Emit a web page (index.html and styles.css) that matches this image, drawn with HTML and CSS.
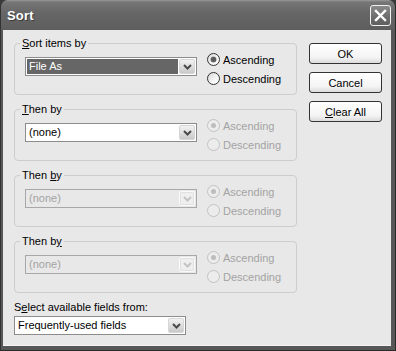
FILE: index.html
```html
<!DOCTYPE html>
<html lang="en">
<head>
  <meta charset="UTF-8" />
  <title>Sort</title>
  <link rel="stylesheet" href="styles.css">
</head>
<body>
  <div class="window">
    <div class="title-bar">
      <span class="title">Sort</span>
      <button class="close-button" aria-label="Close">
        <svg width="13" height="13" viewBox="0 0 13 13">
          <path d="M2 2 L11 11 M11 2 L2 11" stroke="#fff" stroke-width="2.4" stroke-linecap="square" fill="none" />
        </svg>
      </button>
    </div>

    <div class="dialog">
      <div class="fields">
        <fieldset class="group">
          <legend><u>S</u>ort items by</legend>
          <div class="combo">
            <span class="combo-value selected">File As</span>
            <span class="combo-button">
              <svg width="9" height="6" viewBox="0 0 9 6"><path d="M1 1 L4.5 4.5 L8 1" stroke="#4a4a4a" stroke-width="2" fill="none" /></svg>
            </span>
          </div>
          <div class="radios">
            <label class="radio checked"><span class="dot"></span>Ascending</label>
            <label class="radio"><span class="dot"></span>Descending</label>
          </div>
        </fieldset>

        <fieldset class="group">
          <legend><u>T</u>hen by</legend>
          <div class="combo">
            <span class="combo-value">(none)</span>
            <span class="combo-button">
              <svg width="9" height="6" viewBox="0 0 9 6"><path d="M1 1 L4.5 4.5 L8 1" stroke="#4a4a4a" stroke-width="2" fill="none" /></svg>
            </span>
          </div>
          <div class="radios disabled">
            <label class="radio checked"><span class="dot"></span>Ascending</label>
            <label class="radio"><span class="dot"></span>Descending</label>
          </div>
        </fieldset>

        <fieldset class="group">
          <legend>Then <u>b</u>y</legend>
          <div class="combo disabled">
            <span class="combo-value">(none)</span>
            <span class="combo-button">
              <svg width="9" height="6" viewBox="0 0 9 6"><path d="M1 1 L4.5 4.5 L8 1" stroke="#c4c4c4" stroke-width="2" fill="none" /></svg>
            </span>
          </div>
          <div class="radios disabled">
            <label class="radio checked"><span class="dot"></span>Ascending</label>
            <label class="radio"><span class="dot"></span>Descending</label>
          </div>
        </fieldset>

        <fieldset class="group">
          <legend>Then b<u>y</u></legend>
          <div class="combo disabled">
            <span class="combo-value">(none)</span>
            <span class="combo-button">
              <svg width="9" height="6" viewBox="0 0 9 6"><path d="M1 1 L4.5 4.5 L8 1" stroke="#c4c4c4" stroke-width="2" fill="none" /></svg>
            </span>
          </div>
          <div class="radios disabled">
            <label class="radio checked"><span class="dot"></span>Ascending</label>
            <label class="radio"><span class="dot"></span>Descending</label>
          </div>
        </fieldset>

        <div class="source-label">S<u>e</u>lect available fields from:</div>
        <div class="combo">
          <span class="combo-value">Frequently-used fields</span>
          <span class="combo-button">
            <svg width="9" height="6" viewBox="0 0 9 6"><path d="M1 1 L4.5 4.5 L8 1" stroke="#4a4a4a" stroke-width="2" fill="none" /></svg>
          </span>
        </div>
      </div>

      <div class="buttons">
        <button class="button">OK</button>
        <button class="button">Cancel</button>
        <button class="button"><u>C</u>lear All</button>
      </div>
    </div>
  </div>
</body>
</html>
```

FILE: styles.css
```css
* {
  box-sizing: border-box;
  margin: 0;
  padding: 0;
}

html, body {
  width: 396px;
  height: 351px;
  background: #3a3a3a;
  font-family: "Liberation Sans", Arial, sans-serif;
  font-size: 11px;
  color: #000;
  overflow: hidden;
}

.window {
  display: flex;
  flex-direction: column;
  height: 351px;
  background: #575757;
  border-radius: 7px 7px 0 0;
  border-left: 1px solid #333;
  border-right: 1px solid #2a2a2a;
  border-bottom: 1px solid #2a2a2a;
}

.title-bar {
  height: 30px;
  display: flex;
  align-items: center;
  justify-content: space-between;
  padding: 0 4px 0 6px;
  border-radius: 7px 7px 0 0;
  background: linear-gradient(#9a9a9a 0, #767676 2px, #676767 40%, #5e5e5e 100%);
}

.title {
  font-size: 13px;
  font-weight: bold;
  color: #fff;
  text-shadow: 1px 1px 0 #3c3c3c;
  letter-spacing: 0.2px;
}

.close-button {
  width: 21px;
  height: 21px;
  display: flex;
  align-items: center;
  justify-content: center;
  border: 1px solid #f2f2f2;
  border-radius: 3px;
  background: linear-gradient(#8a8a8a, #6c6c6c 60%, #5f5f5f);
}

.dialog {
  flex: 1;
  display: flex;
  gap: 12px;
  margin: 0 4px 4px 2px;
  padding: 6px 9px 0 11px;
  background: #e8e8e8;
  border-bottom: 1px solid #f4f4f4;
}

.fields {
  width: 283px;
  display: flex;
  flex-direction: column;
}

.group {
  display: flex;
  align-items: flex-start;
  gap: 10px;
  min-width: 0;
  margin-bottom: 7px;
  padding: 0 6px 6px 10px;
  border: 1px solid #cdcdcd;
  border-radius: 4px;
}

.group legend {
  margin-left: -5px;
  padding: 0 2px;
  line-height: 14px;
}

.combo {
  width: 172px;
  height: 19px;
  display: flex;
  align-items: center;
  gap: 1px;
  padding: 1px;
  background: #fff;
  border: 1px solid #8c8c8c;
}

.group .combo {
  margin-top: 7px;
}

.combo-value {
  flex: 1;
  height: 15px;
  line-height: 15px;
  padding-left: 2px;
  white-space: nowrap;
  overflow: hidden;
}

.combo-value.selected {
  background: #666;
  color: #fff;
}

.combo-button {
  width: 16px;
  height: 15px;
  display: flex;
  align-items: center;
  justify-content: center;
  border-radius: 2px;
  border: 1px solid #d6d6d6;
  background: linear-gradient(#f2f2f2, #dadada 60%, #c9c9c9);
}

.combo.disabled {
  background: #e8e8e8;
  border-color: #a8a8a8;
}

.combo.disabled .combo-value {
  color: #a3a3a3;
}

.combo.disabled .combo-button {
  background: #efefef;
  border-color: #fafafa;
  box-shadow: inset 0 0 0 1px #e0e0e0;
}

.radios {
  display: flex;
  flex-direction: column;
}

.radio {
  height: 19px;
  display: flex;
  align-items: center;
  gap: 3px;
}

.dot {
  width: 13px;
  height: 13px;
  display: flex;
  align-items: center;
  justify-content: center;
  border: 1px solid #333;
  border-radius: 50%;
  background: linear-gradient(135deg, #d8d8d8, #f6f6f6 60%, #fff);
}

.radio.checked .dot::after {
  content: "";
  width: 5px;
  height: 5px;
  border-radius: 50%;
  background: #5a5a5a;
  box-shadow: 0 0 0 0.5px #888;
}

.radios.disabled .radio {
  color: #a3a3a3;
}

.radios.disabled .dot {
  border-color: #c2c2c2;
  background: #ececec;
}

.radios.disabled .radio.checked .dot::after {
  background: #bdbdbd;
  box-shadow: none;
}

.source-label {
  line-height: 14px;
  margin-bottom: 2px;
  padding-left: 0;
}

.buttons {
  width: 73px;
  margin-top: 7px;
  display: flex;
  flex-direction: column;
  gap: 8px;
}

.button {
  height: 21px;
  font-family: inherit;
  font-size: 11px;
  color: #000;
  border: 1px solid #333;
  border-radius: 3px;
  background: linear-gradient(#fff, #f4f4f4 70%, #dcdcdc);
}
```
